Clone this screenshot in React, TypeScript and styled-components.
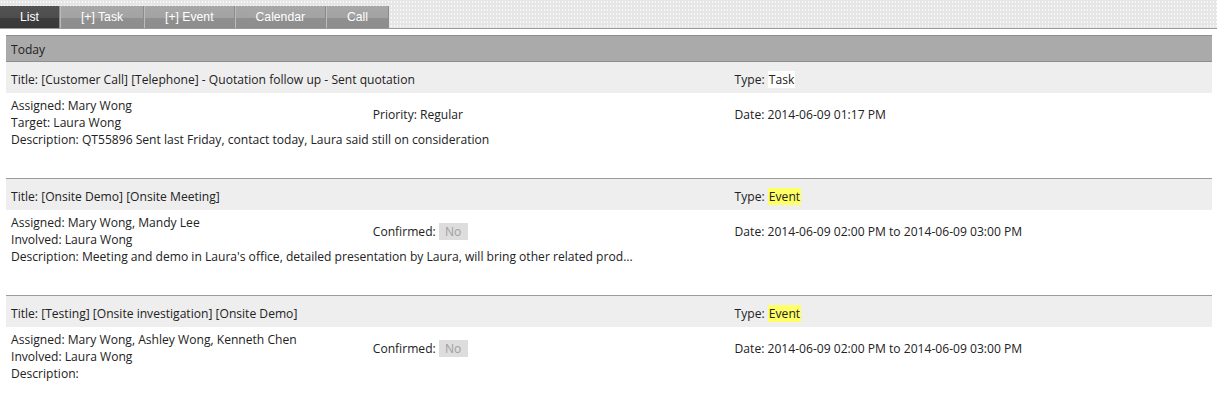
import React from "react";
import styled, { createGlobalStyle, css } from "styled-components";

const TEXT_FONT = `"Open Sans", "Noto Sans", sans-serif`;

const GlobalStyle = createGlobalStyle`
  html, body { margin: 0; padding: 0; background: #ffffff; }
  body { font-family: ${TEXT_FONT}; font-size: 12.1px; color: #222222; }
`;

const TabBar = styled.div`
  height: 28px;
  border-bottom: 1px solid #9a9a9a;
  background-color: #e6e6e6;
  background-image: radial-gradient(circle, #fafafa 0.7px, transparent 1.1px);
  background-size: 3px 4px;
  display: flex;
  align-items: flex-end;
`;

const Tab = styled.div<{ $active?: boolean }>`
  height: 22px;
  padding: 0 20px;
  display: flex;
  align-items: center;
  font-family: "Liberation Sans", Arial, sans-serif;
  font-size: 12.2px;
  color: #ffffff;
  border-left: 1px solid #bcbcbc;
  border-right: 1px solid #8c8c8c;
  background: linear-gradient(to bottom, #a7a7a7 0, #a3a3a3 54%, #8f8f8f 55%, #8d8d8d 100%);
  ${(p) =>
    p.$active &&
    css`
      border-left: none;
      background: linear-gradient(to bottom, #535353 0, #4d4d4d 54%, #3c3c3c 55%, #393939 100%);
    `}
`;

const Section = styled.div`
  margin: 6px 5px 0 6px;
`;

const SectionHeader = styled.div`
  height: 23px;
  border-top: 1px solid #8e8e8e;
  border-bottom: 1px solid #8e8e8e;
  background: #aaaaaa;
  padding: 2px 5px 0;
  box-sizing: content-box;
  display: flex;
  align-items: center;
  line-height: 17px;
`;

const columns = css`
  display: grid;
  grid-template-columns: 30% 30% 40%;
`;

const TitleRow = styled.div`
  ${columns};
  height: 31px;
  box-sizing: border-box;
  padding-top: 4px;
  background: #eeeeee;
  align-items: center;
  line-height: 17px;
`;

const TitleCell = styled.div<{ $span?: number }>`
  padding: 0 5px;
  grid-column: span ${(p) => p.$span ?? 1};
  white-space: nowrap;
`;

const Body = styled.div`
  ${columns};
  grid-template-rows: auto auto 1fr;
  height: 86px;
  box-sizing: border-box;
  padding-top: 5px;
  border-bottom: 1px solid #9c9c9c;
  line-height: 16.8px;
`;

const Cell = styled.div`
  padding: 0 5px;
  white-space: nowrap;
`;

const MidCell = styled(Cell)`
  align-self: center;
  padding-top: 1px;
`;

const DescCell = styled(Cell)`
  grid-column: 1 / -1;
`;

const TypeTag = styled.span<{ $kind: "Task" | "Event" }>`
  background: ${(p) => (p.$kind === "Event" ? "#ffff66" : "#ffffff")};
  padding: 0 1px;
`;

const Badge = styled.span`
  display: inline-block;
  background: #dddddd;
  color: #a0a0a0;
  padding: 0 7px 0 6px;
  line-height: 17px;
`;

type Item = {
  title: string;
  type: "Task" | "Event";
  people: [string, string][];
  mid: React.ReactNode;
  date: string;
  description: string;
};

const items: Item[] = [
  {
    title: "[Customer Call] [Telephone] - Quotation follow up - Sent quotation",
    type: "Task",
    people: [
      ["Assigned", "Mary Wong"],
      ["Target", "Laura Wong"],
    ],
    mid: <>Priority: Regular</>,
    date: "2014-06-09 01:17 PM",
    description: "QT55896 Sent last Friday, contact today, Laura said still on consideration",
  },
  {
    title: "[Onsite Demo] [Onsite Meeting]",
    type: "Event",
    people: [
      ["Assigned", "Mary Wong, Mandy Lee"],
      ["Involved", "Laura Wong"],
    ],
    mid: (
      <>
        Confirmed: <Badge>No</Badge>
      </>
    ),
    date: "2014-06-09 02:00 PM to 2014-06-09 03:00 PM",
    description:
      "Meeting and demo in Laura's office, detailed presentation by Laura, will bring other related prod...",
  },
  {
    title: "[Testing] [Onsite investigation] [Onsite Demo]",
    type: "Event",
    people: [
      ["Assigned", "Mary Wong, Ashley Wong, Kenneth Chen"],
      ["Involved", "Laura Wong"],
    ],
    mid: (
      <>
        Confirmed: <Badge>No</Badge>
      </>
    ),
    date: "2014-06-09 02:00 PM to 2014-06-09 03:00 PM",
    description: "",
  },
];

const tabs = ["List", "[+] Task", "[+] Event", "Calendar", "Call"];

export default function App() {
  return (
    <>
      <GlobalStyle />
      <TabBar>
        {tabs.map((t, i) => (
          <Tab key={t} $active={i === 0}>
            {t}
          </Tab>
        ))}
      </TabBar>
      <Section>
        <SectionHeader>Today</SectionHeader>
        {items.map((it) => (
          <React.Fragment key={it.title}>
            <TitleRow>
              <TitleCell $span={2}>Title: {it.title}</TitleCell>
              <TitleCell>
                Type: <TypeTag $kind={it.type}>{it.type}</TypeTag>
              </TitleCell>
            </TitleRow>
            <Body>
              <Cell>
                {it.people.map(([k, v]) => (
                  <div key={k}>
                    {k}: {v}
                  </div>
                ))}
              </Cell>
              <MidCell>{it.mid}</MidCell>
              <MidCell>Date: {it.date}</MidCell>
              <DescCell>Description: {it.description}</DescCell>
            </Body>
          </React.Fragment>
        ))}
      </Section>
    </>
  );
}
